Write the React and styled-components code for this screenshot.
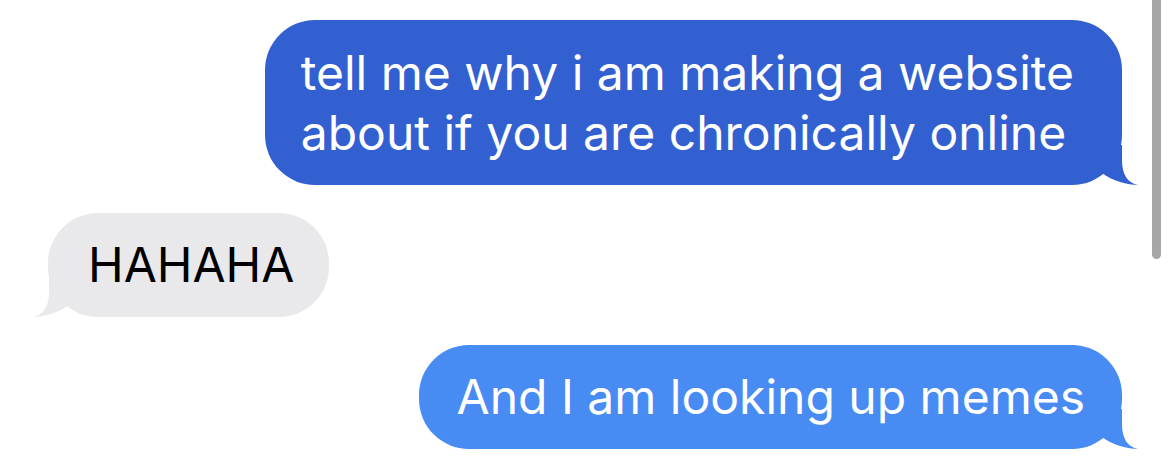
import React from "react";
import styled, { createGlobalStyle } from "styled-components";

const Global = createGlobalStyle`
  html, body { margin: 0; padding: 0; background: #ffffff; }
  body { font-family: "Inter", "Liberation Sans", sans-serif; overflow: hidden; }
`;

const Screen = styled.div`
  position: relative;
  width: 1170px;
  height: 462px;
  overflow: hidden;
  background: #ffffff;
`;

const Thread = styled.div`
  display: flex;
  flex-direction: column;
  gap: 28px;
  padding: 20px 48px 0 48px;
`;

const Bubble = styled.div`
  position: relative;
  align-self: ${(p) => (p.$from === "me" ? "flex-end" : "flex-start")};
  background: ${(p) => p.$bg};
  color: ${(p) => (p.$from === "me" ? "#ffffff" : "#000000")};
  border-radius: 50px;
  padding: ${(p) => p.$padT}px ${(p) => p.$padR}px ${(p) => p.$padB}px ${(p) => p.$padL}px;
  font-size: 48px;
  line-height: 60px;
  white-space: nowrap;
`;

const Tail = styled.svg`
  position: absolute;
  bottom: 0;
  width: 40px;
  height: 40px;
  ${(p) => (p.$side === "right" ? "right: -16px;" : "left: -15px; transform: scaleX(-1);")}
`;

const Scroll = styled.div`
  position: absolute;
  top: -10px;
  right: 9px;
  width: 9px;
  height: 269px;
  border-radius: 5px;
  background: #a6a6a6;
`;

function BubbleTail({ side, color }) {
  return (
    <Tail $side={side} viewBox="0 0 40 40">
      <path
        d="M24 0 L24 15 C24 30 30 38 40 40 C30 40 14 36 4 28 L0 0 Z"
        fill={color}
      />
    </Tail>
  );
}

function Message({ from, bg, padL, padR, padT = 22, padB = 22, children }) {
  return (
    <Bubble $from={from} $bg={bg} $padL={padL} $padR={padR} $padT={padT} $padB={padB}>
      {children}
      <BubbleTail side={from === "me" ? "right" : "left"} color={bg} />
    </Bubble>
  );
}

export default function App() {
  return (
    <>
      <Global />
      <Screen>
        <Thread>
          <Message from="me" bg="#3360d1" padL={36} padR={48} padT={23} padB={22}>
            tell me why i am making a website
            <br />
            about if you are chronically online
          </Message>
          <Message from="them" bg="#e9e9eb" padL={40} padR={35}>
            HAHAHA
          </Message>
          <Message from="me" bg="#488bf3" padL={38} padR={37}>
            And I am looking up memes
          </Message>
        </Thread>
        <Scroll />
      </Screen>
    </>
  );
}
